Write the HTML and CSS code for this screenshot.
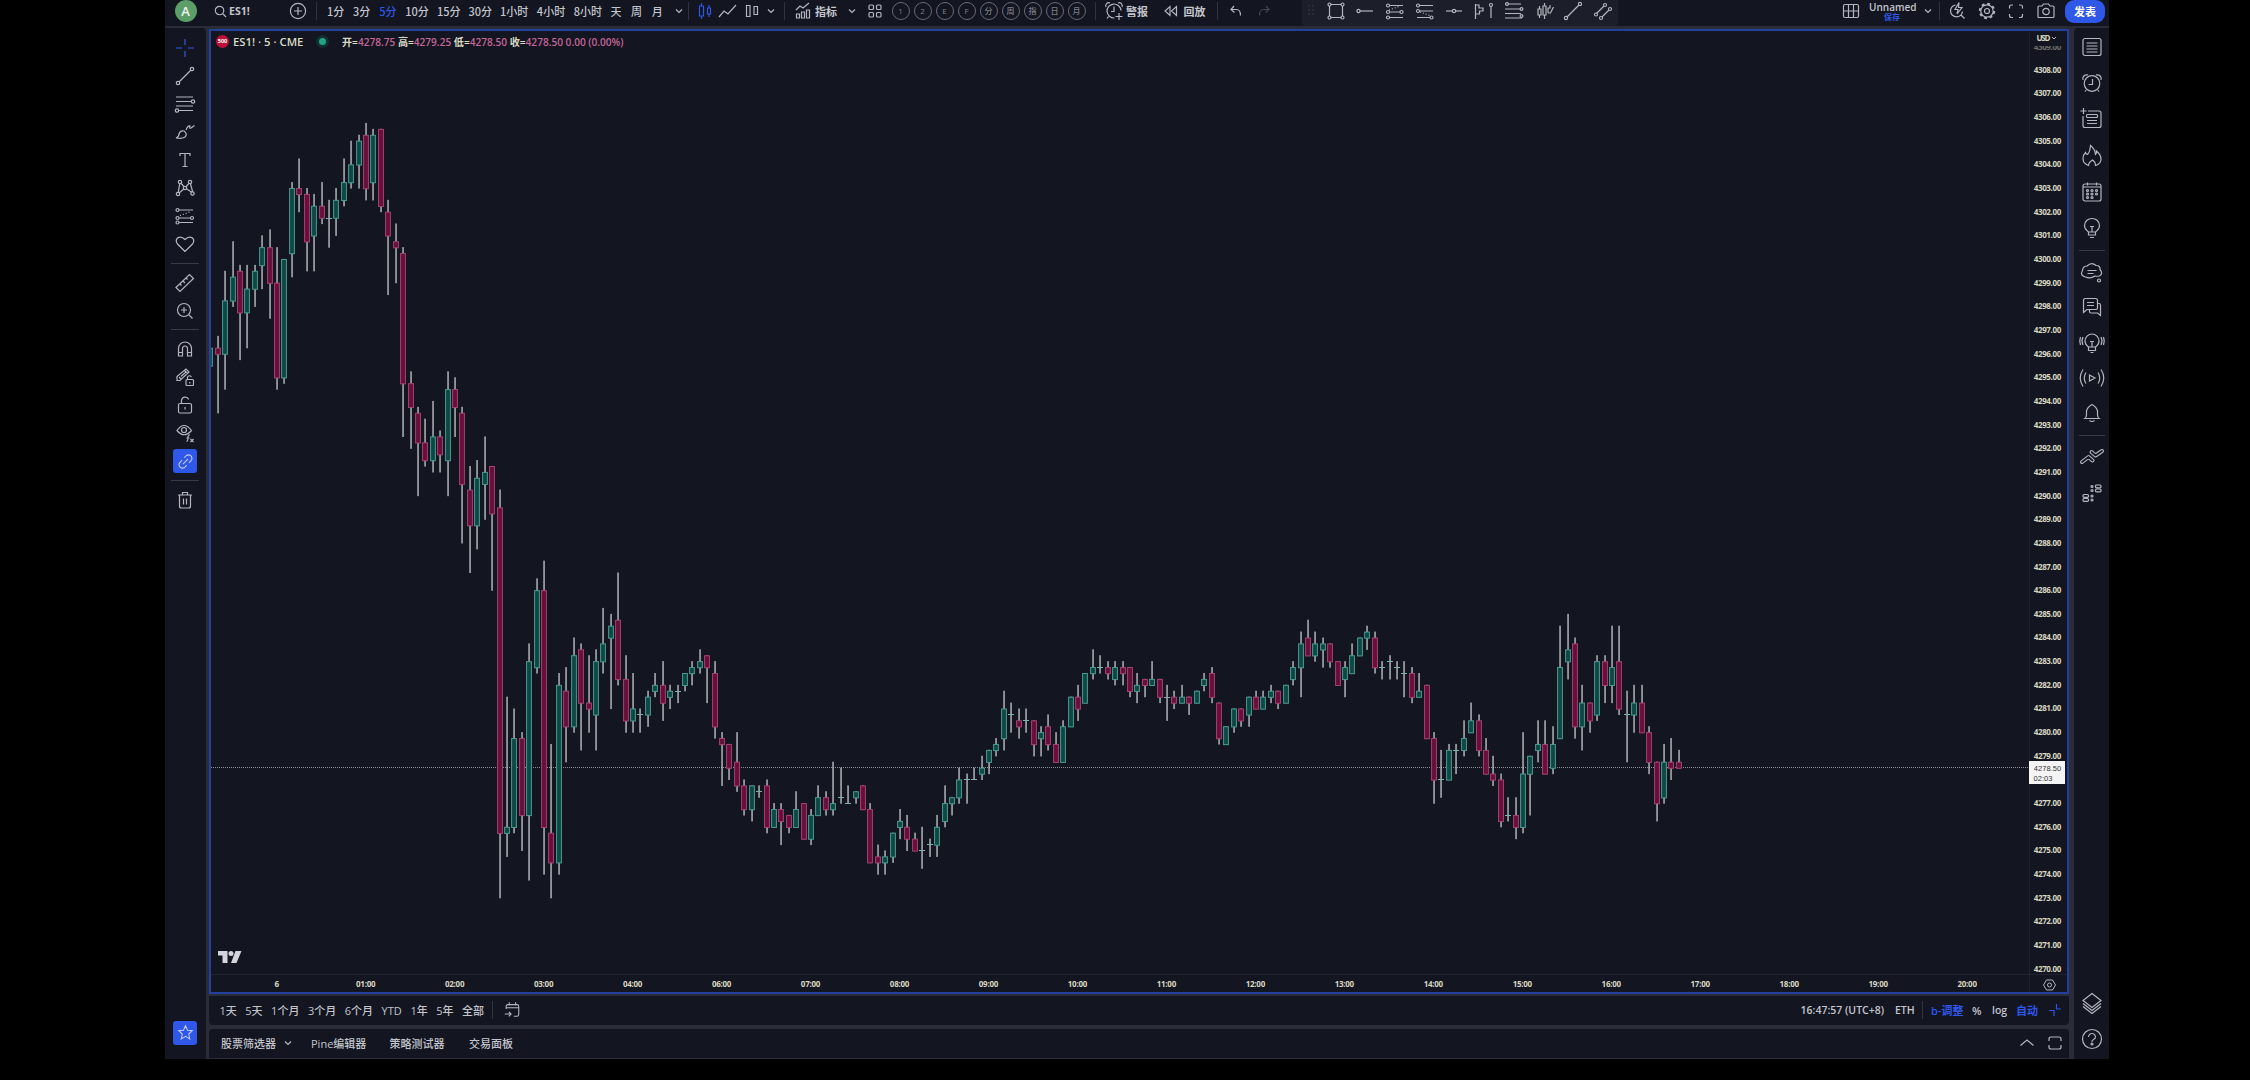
FILE: index.html
```html
<!DOCTYPE html>
<html lang="zh-CN">
<head>
    <meta charset="UTF-8">
    <meta name="viewport" content="width=device-width, initial-scale=1.0">
    <title>ES1! 4278.50</title>
    <link rel="stylesheet" href="styles.css">
</head>
<body>
    <div class="app">
        <!-- Top toolbar -->
        <header class="topbar">
            <div class="avatar-slot"><span class="avatar">A</span></div>
            <div class="symbol">
                <svg class="icon small" viewBox="0 0 20 20"><circle cx="8.5" cy="8.5" r="6.5"/><path d="M13.5 13.5l5 5"/></svg>
                <b>ES1!</b>
            </div>
            <svg class="icon" viewBox="0 0 20 20"><circle cx="10" cy="10" r="7.6"/><path d="M10 6v8M6 10h8"/></svg>
            <i class="sep sep-a"></i>
            <nav class="intervals">
                <span>1分</span><span>3分</span><span class="active">5分</span>
                <span class="mid">10分</span><span class="mid">15分</span><span class="mid">30分</span>
                <span class="wide">1小时</span><span class="wide">4小时</span><span class="wide">8小时</span>
                <span class="one">天</span><span class="one">周</span><span class="one">月</span>
            </nav>
            <svg class="icon chev" viewBox="0 0 14 20"><path d="M4 8.5l3 3 3-3"/></svg>
            <i class="sep sep-b"></i>
            <svg class="icon w24 blue" viewBox="0 0 20 20"><path d="M4.500 5h4v10h-4zM6.500 2v3M6.500 15v3M12.500 7h3v6h-3zM14 4v3M14 13v3"/></svg>
            <svg class="icon w24" viewBox="0 0 20 20"><path d="M1 16l5-6 4 3 8-9"/></svg>
            <svg class="icon w24" viewBox="0 0 20 20"><path d="M4.500 4.500h3.500v11H4.500zM12 5.500h3.500v8H12z"/></svg>
            <svg class="icon chev" viewBox="0 0 14 20"><path d="M4 8.5l3 3 3-3"/></svg>
            <i class="sep sep-c"></i>
            <svg class="icon" viewBox="0 0 20 20"><path d="M3.500 17v-4h3v4zM8.500 17v-6h3v6zM13.500 17V9h3v8zM3 9l4-4 3 2 6-5"/></svg>
            <span class="label">指标</span>
            <svg class="icon chev chev-gap" viewBox="0 0 14 20"><path d="M4 8.5l3 3 3-3"/></svg>
            <svg class="icon" viewBox="0 0 20 20"><rect x="4" y="4" width="4.500" height="4.500" rx="1"/><rect x="11.500" y="4" width="4.500" height="4.500" rx="1"/><rect x="4" y="11.500" width="4.500" height="4.500" rx="1"/><rect x="11.500" y="11.500" width="4.500" height="4.500" rx="1"/></svg>
            <div class="templates">
                <span>1</span><span>2</span><span>E</span><span>F</span><span>分</span><span>周</span><span>指</span><span>日</span><span>月</span>
            </div>
            <i class="sep"></i>
            <svg class="icon" viewBox="0 0 20 20"><path d="M17 9.500a7 7 0 1 0-6.500 7.500M10 5.500v5H7M2 6a3 3 0 0 1 4-4M14 2a3 3 0 0 1 4 4M4.500 15.500L3 17.500M15 12v7M11.500 15.500h7"/></svg>
            <span class="label">警报</span>
            <svg class="icon rewind" viewBox="0 0 20 20"><path d="M9 5.500v9L4 10zM15.500 5.500v9l-5-4.500z"/></svg>
            <span class="label">回放</span>
            <i class="sep sep-d"></i>
            <svg class="icon" viewBox="0 0 20 20"><path d="M8 5L5 8.500l3.500 3M5 8.500h5.500q4 0 4 6"/></svg>
            <svg class="icon redo" viewBox="0 0 20 20"><path d="M12 5l3 3.500-3.500 3M15 8.500H9.500q-4 0-4 6"/></svg>

            <div class="top-right">
                <svg class="icon" viewBox="0 0 20 20"><rect x="2.500" y="3.500" width="15" height="13" rx="1.500"/><path d="M7.500 3.500v13M12.500 3.500v13M2.500 10h15"/></svg>
                <div class="layout-name"><b>Unnamed</b><span>保存</span></div>
                <svg class="icon chev" viewBox="0 0 14 20"><path d="M4 8.5l3 3 3-3"/></svg>
                <i class="sep sep-e"></i>
                <svg class="icon" viewBox="0 0 20 20"><path d="M8.500 4a6 6 0 1 0 7 6.500M14 14l3.500 3.500M12 1.500L8 8.500h3l-1 4.500 5-6.500h-3.500z"/></svg>
                <svg class="icon" viewBox="0 0 20 20"><circle cx="10" cy="10" r="2.500"/><circle cx="10" cy="10" r="6.200"/><circle class="teeth" cx="10" cy="10" r="7.200"/></svg>
                <svg class="icon" viewBox="0 0 20 20"><path d="M7 4H5.500Q3.500 4 3.500 6v1.500M13 4h1.500q2 0 2 2v1.500M7 16.500H5.500q-2 0-2-2V13M13 16.500h1.500q2 0 2-2V13"/></svg>
                <svg class="icon" viewBox="0 0 20 20"><path d="M2 6q0-1 1-1h3l1.500-2h5L14 5h3q1 0 1 1v9.500q0 1-1 1H3q-1 0-1-1z"/><circle cx="10" cy="10.500" r="3.200"/></svg>
                <button class="publish">发表</button>
            </div>

            <!-- Floating favourites -->
            <div class="favs">
                <svg class="icon grip" viewBox="0 0 10 20"><path d="M2.500 5h1M6.500 5h1M2.500 9h1M6.500 9h1M2.500 13h1M6.500 13h1"/></svg>
                <svg class="icon" viewBox="0 0 20 20"><path d="M3.500 3.500h13v13h-13z"/><g class="dot"><circle cx="3.500" cy="3.500" r="1.500"/><circle cx="16.500" cy="3.500" r="1.500"/><circle cx="3.500" cy="16.500" r="1.500"/><circle cx="16.500" cy="16.500" r="1.500"/></g></svg>
                <svg class="icon" viewBox="0 0 20 20"><path d="M4 10h14"/><circle class="dot" cx="3.500" cy="10" r="1.600"/></svg>
                <svg class="icon" viewBox="0 0 20 20"><path d="M2 4.500h16M2 11h16M2 16.500h16"/><path stroke-dasharray="1 2" d="M4 9l11-4"/><g class="dot"><circle cx="3" cy="4.500" r="1.500"/><circle cx="3" cy="11" r="1.500"/><circle cx="16.500" cy="11" r="1.500"/><circle cx="3" cy="16.500" r="1.500"/></g></svg>
                <svg class="icon" viewBox="0 0 20 20"><path d="M2 4.500h16M2 10h16M2 16.500h16"/><path stroke-dasharray="1 2" d="M5 11l11 4"/><g class="dot"><circle cx="3" cy="4.500" r="1.500"/><circle cx="3" cy="10" r="1.500"/><circle cx="16.500" cy="16.500" r="1.500"/></g></svg>
                <svg class="icon" viewBox="0 0 20 20"><path d="M2 10h16"/><circle class="dot" cx="10" cy="10" r="1.600"/></svg>
                <svg class="icon" viewBox="0 0 20 20"><path d="M1.500 3v15M1.500 4h3.500v3h4v3H5.500v3h-4M17 5v12"/><circle class="dot" cx="17" cy="4" r="1.500"/></svg>
                <svg class="icon" viewBox="0 0 20 20"><path d="M1 3h16M1 8h17M1 12.500h16M1 17h17"/><g class="dot"><circle cx="3" cy="3" r="1.400"/><circle cx="17.500" cy="8" r="1.400"/><circle cx="17.500" cy="15" r="1.400"/></g></svg>
                <svg class="icon" viewBox="0 0 20 20"><path d="M4 8h3v6H4zM5.500 5v3M5.500 14v3M9 5h3v9H9zM10.500 2v3M10.500 14v4M14 12h2.500l3-6M14 12V7h2V4"/></svg>
                <svg class="icon" viewBox="0 0 20 20"><path d="M3 17L17 3"/><g class="dot"><circle cx="3" cy="17" r="1.600"/><circle cx="17" cy="3" r="1.600"/></g></svg>
                <svg class="icon" viewBox="0 0 20 20"><path d="M3 13l9-9M8 17l9-9"/><g class="dot"><circle cx="3" cy="13.500" r="1.500"/><circle cx="12" cy="4" r="1.500"/><circle cx="8" cy="17" r="1.500"/><circle cx="17" cy="8" r="1.500"/></g></svg>
            </div>
        </header>

        <div class="main">
            <!-- Drawing tools -->
            <aside class="tools">
                <svg class="icon cross" viewBox="0 0 20 20"><path d="M10 1v6M10 13v6M1 10h6M13 10h6"/></svg>
                <svg class="icon" viewBox="0 0 20 20"><path d="M3.500 16.500l13-13"/><g class="dot"><circle cx="3" cy="17" r="1.700"/><circle cx="17" cy="3" r="1.700"/></g></svg>
                <svg class="icon" viewBox="0 0 20 20"><path d="M1 3h17M1 7.500h16M1 12h17M4 16.500h14"/><g class="dot"><circle cx="18" cy="7.500" r="1.700"/><circle cx="2" cy="16.500" r="1.700"/></g></svg>
                <svg class="icon" viewBox="0 0 20 20"><path d="M1 16q3-1 3-4 1-4 5-3 4 3 1 6-3 2-9 1zM11 8q2-5 4-4-1 3 1 2l3.500-2.500"/></svg>
                <svg class="icon" viewBox="0 0 20 20"><path d="M5 6V3.500h10V6M10 3.500v13M7.500 16.500h5"/></svg>
                <svg class="icon" viewBox="0 0 20 20"><path d="M3 16L5 4l5 6 5-6 3 11-8-5z"/><g class="dot"><circle cx="3" cy="16" r="1.700"/><circle cx="5" cy="4" r="1.700"/><circle cx="10" cy="10" r="1.700"/><circle cx="15" cy="4" r="1.700"/><circle cx="17.500" cy="15.500" r="1.700"/></g></svg>
                <svg class="icon" viewBox="0 0 20 20"><path d="M2 4h16M2 12h16M2 16.500h16"/><path stroke-dasharray="1 2" d="M5 9.500l11-4"/><g class="dot"><circle cx="2.500" cy="4" r="1.500"/><circle cx="2.500" cy="12" r="1.500"/><circle cx="17" cy="12" r="1.500"/><circle cx="2.500" cy="16.500" r="1.500"/></g></svg>
                <svg class="icon" viewBox="0 0 20 20"><path d="M10 17.500L2.500 10Q0 6.500 2.500 4 6 1.500 10 5.500 14 1.500 17.500 4 20 6.500 17.500 10z"/></svg>
                <i class="hsep"></i>
                <svg class="icon" viewBox="0 0 20 20"><path d="M1 14.500L14.500 1.500l4 4L5 18.500zM5 11l1.500 1.500M8 8l2 2M11 5l1.500 1.500"/></svg>
                <svg class="icon" viewBox="0 0 20 20"><circle cx="9" cy="9" r="6.500"/><path d="M14 14l3.500 3.500M9 6v6M6 9h6"/></svg>
                <i class="hsep"></i>
                <svg class="icon" viewBox="0 0 20 20"><path d="M3.500 17V9.500a6.500 6.500 0 0 1 13 0V17h-4V9.500a2.500 2.500 0 0 0-5 0V17zM3.500 13.500h4M12.500 13.500h4"/></svg>
                <svg class="icon" viewBox="0 0 20 20"><path d="M2 13.500v-4L11 2l3 3-9 8.500zM4 10l2 2M9.500 3.500l3 3M6 9.500l5-4.500"/><rect x="11" y="12.500" width="7.500" height="6" rx="1"/><path d="M12.500 12.500V10q2-2.500 4 0M14.800 15v1.500"/></svg>
                <svg class="icon" viewBox="0 0 20 20"><rect x="3.500" y="8.500" width="13" height="9.500" rx="1.500"/><path d="M6.500 8.500V5q1.500-4 5.500-2.500 1.500 1 1.500 2M10 12v2.500"/></svg>
                <svg class="icon" viewBox="0 0 20 20"><path d="M2 7.500Q9-2.500 16.500 7.500 9 16 2 7.500z"/><circle cx="9" cy="7" r="2.500"/><path d="M11.500 18.500q1.500 0 1.500-5 .5-2 2-1.500M11.500 15h3M15.500 16l3 3M18.500 16l-3 3"/></svg>
                <span class="tile"><svg class="icon" viewBox="0 0 20 20"><path d="M8.500 5.500L11 3q3.500-2 6 1 1.500 3-.5 5L14 11.500M11.500 14.500L9 17q-3.500 2-6-1-1.500-3 .5-5L6 8.500M7 13l6-6"/></svg></span>
                <i class="hsep"></i>
                <svg class="icon" viewBox="0 0 20 20"><path d="M3 5h14M7.500 5V2.500h5V5M4.500 5v11q0 2 2 2h7q2 0 2-2V5M8.500 8.500v6M11.500 8.500v6"/></svg>
                <span class="tile fav-tile"><svg class="icon" viewBox="0 0 20 20"><path d="M10 2l2.400 5.300 5.600.6-4.200 3.900 1.200 5.700-5-2.900-5 2.900 1.200-5.700L2 7.900l5.600-.6z"/></svg></span>
            </aside>

            <div class="center">
                <section class="chart">
                    <svg id="plot" class="plot" viewBox="211 31 1856 961"></svg>
                    <div class="legend">
                        <span class="badge">500</span>
                        <span class="title">ES1! · 5 · CME</span>
                        <span class="status"></span>
                        <span class="ohlc">开=<em>4278.75</em> 高=<em>4279.25</em> 低=<em>4278.50</em> 收=<em>4278.50 0.00 (0.00%)</em></span>
                    </div>
                </section>

                <div class="ranges">
                    <span class="r1">1天</span><span class="r1">5天</span><span class="r3">1个月</span><span class="r3">3个月</span><span class="r3">6个月</span><span class="r2">YTD</span><span class="r1">1年</span><span class="r1">5年</span><span class="r4">全部</span>
                    <i class="sep"></i>
                    <svg class="icon" viewBox="0 0 20 20"><path d="M3.500 9V6q0-2 2-2h10q2 0 2 2v9q0 2-2 2H12M3.500 7.500h14M7 1.500V5M14 1.500V5M2 14.500h7M6.500 12L9 14.500 6.500 17"/></svg>
                    <div class="scale-opts">
                        <span class="clock">16:47:57 (UTC+8)</span>
                        <span class="eth">ETH</span>
                        <i class="sep"></i>
                        <span class="on badj">b-调整</span>
                        <span class="pct">%</span>
                        <span class="log">log</span>
                        <span class="on auto">自动</span>
                        <svg class="icon blue" viewBox="0 0 20 20"><path d="M4 10.500h5V16M16 9h-4.500V4"/></svg>
                    </div>
                </div>

                <footer class="bottom">
                    <span class="b1">股票筛选器</span>
                    <svg class="icon chev" viewBox="0 0 14 20"><path d="M4 8.5l3 3 3-3"/></svg>
                    <span class="b2">Pine编辑器</span>
                    <span class="b3">策略测试器</span>
                    <span class="b4">交易面板</span>
                    <div class="bottom-right">
                        <svg class="icon" viewBox="0 0 20 20"><path d="M3.500 12.500L10 7l6.500 5.500"/></svg>
                        <svg class="icon" viewBox="0 0 20 20"><path d="M4 8V6q0-2 2-2h8q2 0 2 2v2M4 12v2q0 2 2 2h8q2 0 2-2v-2"/></svg>
                    </div>
                </footer>
            </div>

            <!-- Widget bar -->
            <aside class="widgets">
                <svg class="icon" viewBox="0 0 20 20"><rect x="1" y="1.500" width="18" height="17" rx="2"/><path d="M4.500 6h11M4.500 9h11M4.500 12h11M4.500 15h11"/></svg>
                <svg class="icon" viewBox="0 0 20 20"><circle cx="10" cy="10.500" r="7.800"/><path d="M10.500 6v5.500H6.500M1 7Q0 1.500 6 2M19 7q1-5.500-5-5M4 17l-1 1.500M16 17l1 1.500"/></svg>
                <svg class="icon" viewBox="0 0 20 20"><path d="M6 2h11q2 0 2 2v12.500q0 2-2 2H3q-2 0-2-2V7M1.500-1v6M-1.500 2h6M5 11.500h10M5 14.500h10"/><rect x="4.500" y="5.500" width="11" height="3" rx="1"/></svg>
                <svg class="icon" viewBox="0 0 20 20"><path d="M6.500 19.500Q1 17.500 1 12.500 1 9 3.500 6.500 4 8.500 5.500 8.500 8 6 8.500-.5q4.500 3.500 5 9 1.500-1 1-3.500 4.500 4 4.500 8 0 5-5.500 6.500Q13.500 16 10.500 14 6.500 16.500 6.500 19.500z"/></svg>
                <svg class="icon" viewBox="0 0 20 20"><rect x="1" y="2" width="18" height="17" rx="2"/><path d="M5.500.5v3M14.500.5v3M1 5h18"/><g class="dot"><circle cx="5.500" cy="8.500" r="1"/><circle cx="10" cy="8.500" r="1"/><circle cx="14.500" cy="8.500" r="1"/><circle cx="5.500" cy="12" r="1"/><circle cx="10" cy="12" r="1"/><circle cx="14.500" cy="12" r="1"/><circle cx="5.500" cy="15.500" r="1"/><circle cx="10" cy="15.500" r="1"/></g></svg>
                <svg class="icon" viewBox="0 0 20 20"><path d="M6.500 14q-4-3-4-6.500a7.500 7 0 0 1 15 0q0 3.500-4 6.500zM6.500 14v3h7v-3M8 19.500h4M8 8.500h4M10 8.500V14"/></svg>
                <i class="hsep"></i>
                <div class="social">
                    <svg class="icon" viewBox="0 0 20 20"><path d="M3.500 15q-6-1.500-3-6.500Q1 4 5 4q4.500-4.500 9-.5 4.500 0 4 4 3.500 4-.5 6.500-3.500.5-4.500 0-4.500 3-9.500 1zM5.500 8.500h9M5.500 11.500h6"/><circle cx="17" cy="18.500" r="1.500"/></svg>
                    <svg class="icon" viewBox="0 0 20 20"><path d="M1.500 15.500V3.500q0-2 2-2h10q2 0 2 2V11q0 1.500-1.500 1.500H5zM5 5.500h7M5 8.500h7M16 6.500h1q1.500 0 1.500 1.500v10.500L15.500 16H9q-1.500 0-1.500-1.500v-1.500"/></svg>
                    <svg class="icon" viewBox="0 0 20 20"><path d="M6.500 14q-3.500-2.500-3.500-6a7 7 0 0 1 14 0q0 3.500-3.500 6zM6.500 14v3.500h7V14M8.500 19.500h3M8 8.500h4M10 8.500V14M1 4q-2 4 0 8M-1.500 4q-1.500 4 0 8M19 4q2 4 0 8M21.500 4q1.500 4 0 8"/></svg>
                    <svg class="icon" viewBox="0 0 20 20"><path d="M7.500 7v6l5.500-3zM4 4.500q-3.500 5.500 0 11M16 4.500q3.500 5.500 0 11M1 1.500q-5.500 8.500 0 17M19 1.500q5.500 8.500 0 17"/></svg>
                    <svg class="icon" viewBox="0 0 20 20"><path d="M3 15.500q1.500-1 1.500-4V8q1-4 5.500-6.500Q14.500 4 15.500 8v3.500q0 3 1.500 4zM2.500 15.500h15M7.500 17.500q2.500 2 5 0"/></svg>
                </div>
                <i class="hsep"></i>
                <svg class="icon" viewBox="0 0 20 20"><g class="outer"><path d="M0 15l6.500-5 4 3.500M9.500 5l4 3.500L20 4"/></g><g class="inner"><path d="M0 15l6.500-5 4 3.500M9.500 5l4 3.500L20 4"/></g></svg>
                <svg class="icon" viewBox="0 0 20 20"><rect x="13.500" y="2" width="5.500" height="2.800" rx="1"/><rect x="13.500" y="6" width="5.500" height="2.800" rx="1"/><rect x="1" y="11.500" width="5.500" height="2.800" rx="1"/><rect x="1" y="15.500" width="5.500" height="2.800" rx="1"/><circle cx="10" cy="3.500" r="1"/><circle cx="10" cy="7.500" r="1"/><circle cx="10" cy="13" r="1"/><circle cx="10" cy="17" r="1"/></svg>
                <div class="widgets-end">
                    <svg class="icon" viewBox="0 0 20 20"><path d="M10 .5l9 7-9 7-9-7zM1 10.500l9 7 9-7M1 13.500l9 7 9-7"/></svg>
                    <svg class="icon" viewBox="0 0 20 20"><circle cx="10" cy="10" r="9.500"/><path d="M6.500 8q.5-3.500 3.500-3.500T13.500 8q0 1.500-2 2.500T10 13"/><circle cx="10" cy="15" r="1"/></svg>
                </div>
            </aside>
        </div>
    </div>
    <script src="chart.js"></script>
</body>
</html>
```

FILE: styles.css
```css
* {
    box-sizing: border-box;
}
body {
    margin: 0;
    background: #000;
    color: #c3c5cd;
    font-family: "Open Sans", "Noto Sans CJK SC", sans-serif;
    font-size: 11px;
    font-weight: 500;
    overflow: hidden;
}
.app {
    width: 1944px;
    height: 1059px;
    margin-left: 165px;
    background: #2a2c37;
    overflow: hidden;
}
.icon {
    width: 20px;
    height: 20px;
    flex: none;
    fill: none;
    stroke: #b4b6bf;
    stroke-width: 1.2;
    overflow: visible;
}
.icon .dot {
    fill: #131520;
}
.icon .teeth {
    stroke-width: 2;
    stroke-dasharray: 2.83 2.825;
}
.icon .outer {
    stroke-width: 4;
    stroke-linecap: round;
    stroke-linejoin: round;
}
.icon .inner {
    stroke: #131520;
    stroke-width: 1.7;
    stroke-linecap: round;
    stroke-linejoin: round;
}
.icon.small {
    width: 13px;
    height: 13px;
    stroke-width: 1.8;
}
.icon.blue {
    stroke: #2f57e8;
}
.icon.chev {
    width: 14px;
}
.icon.w24 {
    margin: 0 1.8px;
}

/* Top toolbar */
.topbar {
    position: relative;
    display: flex;
    align-items: center;
    height: 26px;
    padding-bottom: 4px;
    background: #131520;
    white-space: nowrap;
}
.avatar-slot {
    width: 41px;
    display: flex;
    justify-content: center;
}
.avatar {
    width: 22px;
    height: 22px;
    border-radius: 50%;
    background: #5b9e68;
    color: #f1f5f1;
    font-size: 13px;
    font-weight: 600;
    line-height: 22px;
    text-align: center;
}
.symbol {
    width: 82px;
    padding-left: 8px;
    display: flex;
    align-items: center;
    gap: 2px;
}
.symbol b {
    font-size: 10.5px;
}
.sep {
    width: 1px;
    height: 18px;
    margin: 0 8px;
    flex: none;
    background: #30333e;
}
.sep-a {
    margin-right: 10px;
}
.sep-b, .sep-e {
    margin: 0 4px;
}
.sep-b {
    margin-left: 1.5px;
}
.sep-c {
    margin: 0 8px 0 6px;
}
.sep-d {
    margin-left: 11px;
}
.sep-e {
    margin-right: 7px;
}
.intervals {
    display: flex;
    font-family: "Noto Sans CJK SC", sans-serif;
}
.intervals span {
    width: 26.1px;
}
.intervals .mid {
    width: 31.6px;
}
.intervals .wide {
    width: 36.8px;
}
.intervals .one {
    width: 20.6px;
}
.intervals .active {
    color: #2f57e8;
}
.label {
    width: 22px;
    margin-left: 2.5px;
    font-weight: 700;
}
.chev-gap {
    margin: 0 5.500px 0 8px;
}
.templates {
    display: flex;
    gap: 4px;
    padding: 0 1px 0 7px;
}
.templates span {
    width: 18px;
    height: 18px;
    border: 1px solid #686b76;
    border-radius: 50%;
    color: #7c7f89;
    font-size: 8px;
    line-height: 16px;
    text-align: center;
}
.rewind {
    margin-left: 13px;
}
.redo {
    margin-left: 8px;
    opacity: .3;
}
.top-right {
    display: flex;
    align-items: center;
    margin-left: auto;
    padding-right: 4px;
}
.top-right > .icon:nth-last-child(-n+5) {
    margin-right: 9.5px;
}
.layout-name {
    width: 46px;
    margin: 1px 6px 0 8px;
    text-align: center;
    line-height: 10px;
}
.layout-name b {
    display: block;
    font-size: 10px;
    font-weight: 600;
}
.layout-name span {
    display: block;
    color: #2f57e8;
    font-size: 8px;
    font-weight: 700;
}
.publish {
    width: 40px;
    height: 23px;
    padding: 0;
    border: 0;
    border-radius: 9px;
    background: #2f57e8;
    color: #fff;
    font: 700 11px "Noto Sans CJK SC", sans-serif;
}
.favs {
    position: absolute;
    left: 1137px;
    top: -4px;
    width: 316px;
    height: 30px;
    padding: 0 4px;
    display: flex;
    align-items: center;
    gap: 9.7px;
    border-radius: 4px;
    background: #1c1e29;
    z-index: 2;
}
.favs .grip {
    width: 10px;
    stroke: #555864;
}

/* Left tools */
.main {
    display: flex;
    height: 1033px;
}
.tools {
    width: 40.5px;
    margin-top: 2px;
    padding: 6px 0 14.5px;
    display: flex;
    flex-direction: column;
    align-items: center;
    border-radius: 0 4px 0 0;
    background: #131520;
}
.tools > .icon {
    margin: 4px 0;
}
.tools > .cross {
    stroke: #2f57e8;
}
.hsep {
    width: 28px;
    height: 1px;
    margin: 4.8px 0;
    background: #383b46;
    flex: none;
}
.tile {
    width: 24px;
    height: 24px;
    margin: 2px 0;
    display: flex;
    align-items: center;
    justify-content: center;
    border-radius: 3px;
    background: #2f57e8;
}
.tile .icon {
    width: 17px;
    height: 17px;
    stroke: #c6d0f8;
}
.fav-tile {
    margin: auto 0 0;
}

/* Chart */
.center {
    width: 1860px;
    margin: 3px 5px 0 3.5px;
    flex: none;
}
.chart {
    position: relative;
    height: 965px;
    border: 2px solid #24409f;
    background: #131520;
}
.plot {
    display: block;
    width: 1856px;
    height: 961px;
}
.plot .wick {
    fill: #c8cad0;
}
.plot .up {
    fill: #0e4743;
    stroke: #4c9b92;
}
.plot .down {
    fill: #680e3a;
    stroke: #a54472;
}
.plot .doji {
    fill: #78b4ae;
}
.plot .axis {
    stroke: #20222d;
}
.plot .last {
    stroke: #8b8d92;
    stroke-dasharray: 1 1;
}
.plot text {
    fill: #d8d6c0;
    font-family: "Open Sans", sans-serif;
    font-size: 8px;
    font-weight: 700;
    text-anchor: middle;
}
.plot .faded {
    opacity: .45;
}
.plot .tag {
    fill: #f4f4f4;
}
.plot .tag-text {
    fill: #33353c;
    font-family: "Liberation Sans", sans-serif;
    font-size: 7.5px;
    font-weight: 400;
}
.plot .logo {
    fill: #d4d5dc;
}
.plot .line {
    fill: none;
    stroke: #b4b6bf;
}
.legend {
    position: absolute;
    left: 5px;
    top: 2.5px;
    height: 16px;
    display: flex;
    align-items: center;
    color: #d8dac3;
    white-space: nowrap;
}
.badge {
    width: 13px;
    height: 13px;
    border-radius: 50%;
    background: #bd1038;
    color: #fff;
    font-size: 5.5px;
    font-weight: 700;
    line-height: 13px;
    text-align: center;
}
.title {
    width: 86px;
    margin-left: 4px;
    font-size: 11.3px;
    font-weight: 600;
}
.status {
    width: 7px;
    height: 7px;
    border-radius: 50%;
    background: #23a383;
    box-shadow: 0 0 0 3px #10302f;
}
.ohlc {
    margin-left: 16px;
    font-size: 10.1px;
    font-weight: 600;
}
.ohlc em {
    color: #c4669a;
    font-style: normal;
}

/* Range bar */
.ranges, .bottom {
    display: flex;
    align-items: center;
    background: #131520;
    white-space: nowrap;
}
.ranges {
    height: 29px;
    margin-top: 2px;
    padding: 0 0 1px 10.5px;
    border-radius: 0 0 4px 4px;
}
.ranges .r1 {
    width: 25.8px;
}
.ranges .r2 {
    width: 29px;
}
.ranges .r3 {
    width: 36.8px;
}
.ranges .r4 {
    width: 22px;
}
.ranges > .icon {
    width: 18px;
    margin-left: 2px;
}
.scale-opts {
    display: flex;
    align-items: center;
    margin-left: auto;
    padding-right: 4px;
    font-weight: 600;
}
.scale-opts .sep {
    margin: 0 8px 0 0;
}
.clock {
    width: 94.5px;
    font-size: 10.5px;
}
.eth {
    width: 27px;
    font-size: 10.5px;
}
.on {
    color: #2f57e8;
}
.badj {
    width: 41px;
}
.pct {
    width: 20px;
}
.log {
    width: 24px;
    font-size: 10.5px;
}
.auto {
    width: 29px;
}

/* Bottom tabs */
.bottom {
    height: 29.5px;
    margin-top: 3.5px;
    padding-left: 12px;
    border-radius: 4px 4px 0 0;
}
.bottom .b1 {
    width: 60px;
}
.bottom .b2 {
    width: 78.5px;
    margin-left: 16px;
}
.bottom .b3 {
    width: 79.5px;
}
.bottom-right {
    display: flex;
    gap: 8px;
    margin-left: auto;
    padding-right: 4px;
}

/* Right widget bar */
.widgets {
    width: 35px;
    margin-top: 2px;
    padding-top: 1px;
    display: flex;
    flex-direction: column;
    align-items: center;
    border-radius: 4px 0 0 0;
    background: #131520;
}
.widgets .icon {
    margin: 8.1px 0;
}
.widgets .hsep {
    width: 26px;
    margin: 4px 0 3.5px;
}
.social {
    display: flex;
    flex-direction: column;
}
.social .icon {
    margin: 7.6px 0;
}
.widgets-end {
    margin-top: auto;
    padding-bottom: 1.5px;
    display: flex;
    flex-direction: column;
}
```

FILE: chart.js
```js
// 5 minute bars: high, body top, body bottom, low in quarter points above 4270
const bars = `
108 105 102 100 u|107 105 104 94 d|118 113 104 98 u|123 117 113 112 u|119 118 111 103 d|119 115 111 105 u|119 118 115 112 u
124 122 119 115 u|125 122 116 110 d|122 116 100 98 d|120 120 100 99 u|133 132 121 117 u|137 132 131 128 d|132 131 123 118 d
131 129 124 118 u|133 129 127 126 d|130 127 127 122 u|132 130 127 124 u|137 133 130 129 u|140 136 133 132 u|141 140 136 132 u
143 141 132 130 d|142 141 133 130 u|142 142 129 128 d|130 128 124 114 d|126 123 122 116 d|122 121 99 90 d|101 99 95 88 d
95 94 89 80 d|93 89 86 85 d|96 90 86 84 u|91 90 87 84 d|101 98 86 80 u|100 98 95 90 d|95 94 82 72 d
85 81 75 67 d|86 83 75 71 u|90 84 82 76 u|85 85 77 64 d|81 78 23 12 d|46 24 23 19 u|44 39 24 23 u
40 39 26 20 d|55 52 26 15 u|66 64 51 50 u|69 64 24 16 d|38 23 18 12 d|50 48 18 16 u|51 47 41 35 d
56 53 41 40 u|55 54 45 37 d|53 45 44 40 d|54 52 43 37 u|61 55 52 50 u|60 58 56 44 u|67 59 49 48 d
53 49 42 40 d|50 44 42 40 u|44 43 43 40 u|47 46 43 41 u|50 48 47 46 u|52 48 45 42 d|48 47 46 44 u
48 47 47 45 u|50 50 48 47 u|52 51 50 48 u|54 52 51 50 u|53 53 51 45 d|52 50 41 39 d|40 39 38 31 d
38 38 34 32 d|40 35 31 30 d|32 31 27 26 d|31 31 27 25 u|31 30 30 29 u|32 31 24 23 d|28 27 24 24 u
28 27 25 21 d|26 26 24 23 d|30 27 24 24 u|28 28 22 22 d|27 26 22 21 u|31 29 26 26 u|30 29 27 26 d
35 28 27 26 u|34 29 29 28 u|31 28 28 28 u|30 30 29 28 u|31 31 27 27 d|28 27 18 18 d|21 19 18 16 d
20 19 18 16 u|23 23 19 18 u|27 25 24 22 u|26 24 22 20 d|23 22 20 20 d|24 20 20 17 u|22 21 21 19 u
26 24 21 19 u|31 28 25 24 u|29 29 28 26 u|34 32 29 28 u|33 32 32 28 u|34 32 32 32 u|36 34 33 32 u
37 37 35 33 u|39 38 37 36 u|47 44 39 37 u|45 43 43 40 u|44 42 41 39 d|44 42 42 40 u|42 42 38 36 d
41 40 39 36 u|43 41 38 37 d|40 38 35 35 d|42 41 35 35 u|46 46 41 41 u|48 46 44 42 d|50 50 45 45 u
54 51 50 49 u|53 51 51 50 u|52 51 50 49 d|52 51 49 48 u|52 51 50 48 d|51 51 47 46 d|50 48 47 45 u
49 49 48 46 d|52 49 48 48 u|49 49 46 45 d|48 46 46 42 u|47 46 45 44 d|48 46 45 45 u|46 46 45 43 d
47 47 45 45 u|50 49 48 47 u|51 50 46 45 d|45 45 39 38 d|41 41 38 38 u|44 44 41 40 u|44 44 42 41 d
46 46 43 41 u|47 46 44 44 d|47 46 44 44 u|48 47 46 45 u|47 47 45 44 d|48 48 45 45 u|52 51 49 48 u
57 55 51 46 u|59 56 53 53 d|57 55 53 52 u|56 55 54 51 u|55 55 52 51 d|52 52 48 48 d|52 51 49 46 u
55 53 50 50 u|56 56 53 53 u|58 57 56 54 u|57 56 51 50 d|52 51 51 49 u|53 52 52 49 u|52 51 51 49 u
52 50 50 46 u|51 50 46 45 d|50 47 46 46 u|48 48 39 39 d|40 39 32 28 d|37 32 32 29 u|38 37 32 32 u
38 37 37 33 u|42 39 37 36 u|45 42 40 40 u|43 42 37 36 d|39 37 33 33 d|36 33 32 31 d|33 32 25 24 d
29 26 26 25 u|29 26 24 22 d|40 33 24 23 u|36 36 33 26 u|42 38 37 35 u|42 38 33 33 d|41 38 34 33 u
58 51 39 39 u|60 54 52 49 u|56 55 41 39 d|48 45 41 37 u|45 45 42 40 d|53 52 43 42 u|53 52 48 45 d
58 51 48 45 u|58 52 44 43 d|47 43 43 35 u|48 45 43 40 u|48 45 40 40 d|41 40 35 33 d|35 35 28 25 d
38 35 29 28 u|39 35 34 32 d|37 35 34 34 d`.trim().split(/[|\n]/).map(row => row.split(' '));

const TICK = 5.9145;
const STEP = 7.4167;
const yOf = ticks => 968.7 - ticks * TICK;

let out = '';

// axis borders and last price line
out += '<path class="axis" d="M2029.5 31V992M211 974.5H2067"/>';
out += '<path class="last" d="M211 767.5H2029"/>';

bars.forEach(([high, top, bottom, low, dir], i) => {
    const x = Math.round(210.25 + i * STEP);
    const y1 = yOf(top);
    const y2 = yOf(bottom);
    out += `<rect class="wick" x="${x - .6}" y="${yOf(high)}" width="1.3" height="${yOf(low) - yOf(high) + .6}"/>`;
    if (top === bottom) {
        out += `<rect class="doji" x="${x - 3}" y="${Math.round(y1)}" width="6" height="1"/>`;
    } else {
        out += `<rect class="${dir === 'u' ? 'up' : 'down'}" x="${x - 2.4}" y="${y1 + .5}" width="4.8" height="${y2 - y1 + .2}"/>`;
    }
});

// price scale
for (let p = 4270; p <= 4308; p++) {
    out += `<text x="2047.5" y="${yOf((p - 4270) * 4) + 3}" textLength="27.5">${p}.00</text>`;
}
out += '<clipPath id="cut"><rect x="2030" y="46" width="36" height="10"/></clipPath>';
out += '<text class="faded" x="2047.5" y="50" textLength="27.5" clip-path="url(#cut)">4309.00</text>';
out += '<text x="2043.5" y="41" textLength="14">USD</text><path class="line" d="M2052 37l2 2 2-2"/>';
out += '<rect class="tag" x="2029" y="761" width="36" height="23"/>';
out += '<text class="tag-text" x="2047.5" y="770.5" textLength="27.5">4278.50</text>';
out += '<text class="tag-text" x="2043" y="780.8">02:03</text>';

// time scale, the session break skips 05:00
const hours = ['6', 1, 2, 3, 4, 6, 7, 8, 9, 10, 11, 12, 13, 14, 15, 16, 17, 18, 19, 20];
hours.forEach((h, i) => {
    const label = i === 0 ? h : String(h).padStart(2, '0') + ':00';
    const fit = i === 0 ? '' : ' textLength="19.5"';
    out += `<text x="${276.8 + i * 88.97}" y="986.5"${fit}>${label}</text>`;
});
out += '<path class="line" d="M2043.5 985l3-5h6l3 5-3 5h-6z"/><circle class="line" cx="2049.5" cy="985" r="2"/>';

// logo
out += '<path class="logo" d="M218 951h9.500v12h-5v-7.500H218zM235.500 951h6l-5 12h-5.500z"/><circle class="logo" cx="231" cy="953.5" r="2.5"/>';

document.getElementById('plot').innerHTML = out;
```
